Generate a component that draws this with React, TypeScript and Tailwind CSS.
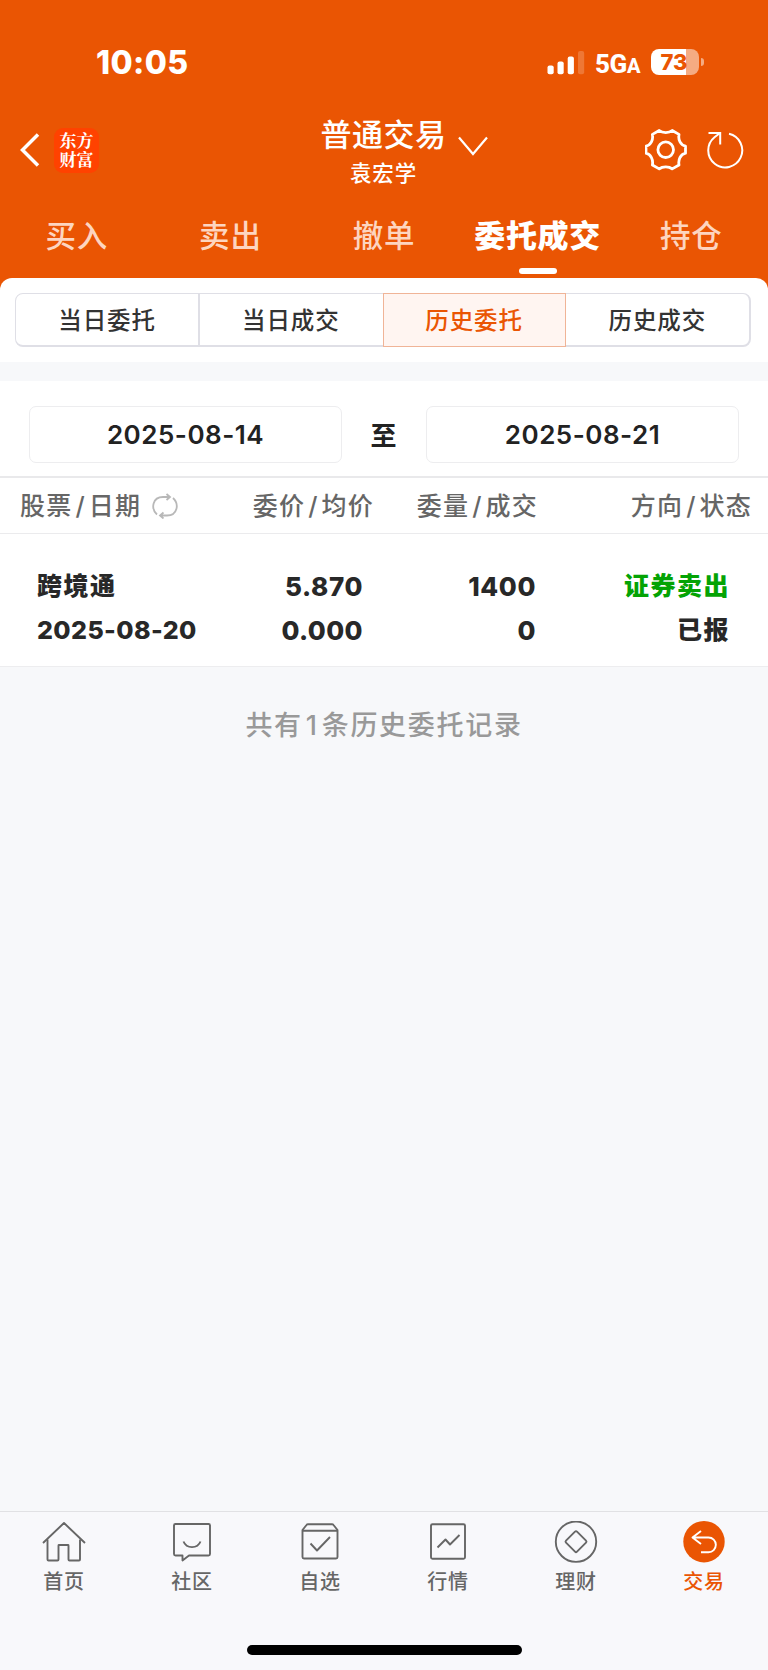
import type { ReactNode } from "react";

const topTabs = ["买入", "卖出", "撤单", "委托成交", "持仓"];
const segments = ["当日委托", "当日成交", "历史委托", "历史成交"];

const icons: Record<string, ReactNode> = {
  home: (
    <>
      <path d="M1 22L22 2L43 22" />
      <path d="M5.500 18.500V38.500Q5.500 39.500 6.500 39.500H15.500Q16.500 39.500 16.500 38.500V24.500Q16.500 24 17 24H26Q26.500 24 26.500 24.500V38.500Q26.500 39.500 27.500 39.500H37Q38 39.500 38 38.500V18.500" />
    </>
  ),
  community: (
    <>
      <path d="M6 3H38.500Q40 3 40 4.500V33Q40 34.500 38.500 34.500H19L12.500 39.500V34.500H5.500Q4 34.500 4 33V4.500Q4 3 5.500 3Z" />
      <path d="M13.500 20.500C16.500 28 27.500 28 30.500 20.500" />
    </>
  ),
  watchlist: (
    <>
      <path d="M4.500 9L8.500 4Q9 3.300 10 3.300H34Q35 3.300 35.500 4L39.500 9V36Q39.500 37.500 38 37.500H6Q4.500 37.500 4.500 36Z" />
      <path d="M4.500 9.700H39.500M12.500 22.500L19 29.500L32 16" />
    </>
  ),
  market: (
    <>
      <rect x="5" y="3.300" width="34" height="34.400" rx="1.500" />
      <path d="M11.500 26.500L19.500 18.500L24 23.500L33.500 14" />
    </>
  ),
  wealth: (
    <>
      <circle cx="22" cy="20.700" r="20.200" />
      <path d="M21 10.700Q22 9.700 23 10.700L32 19.700Q33 20.700 32 21.700L23 30.700Q22 31.700 21 30.700L12 21.700Q11 20.700 12 19.700Z" />
    </>
  ),
  trade: (
    <>
      <circle cx="22" cy="20.700" r="20.700" fill="#ea5503" stroke="none" />
      <path d="M19 10L10.500 16.500L19 23M10.500 16.500H26.500A7.300 7.300 0 0 1 26.500 31.200H19" stroke="#fff" />
    </>
  ),
};

const bottomTabs = [
  { icon: "home", label: "首页" },
  { icon: "community", label: "社区" },
  { icon: "watchlist", label: "自选" },
  { icon: "market", label: "行情" },
  { icon: "wealth", label: "理财" },
  { icon: "trade", label: "交易", active: true },
];

function StatusBar() {
  return (
    <div className="flex h-[100px] items-start justify-between pl-[96px] pr-[64px] pt-[47px] text-white">
      <span className="text-[32px] font-extrabold leading-8 tracking-[0.400px]">10:05</span>
      <div className="flex h-8 items-center">
        <svg className="h-6 w-[38px]" viewBox="0 0 38 24" fill="currentColor">
          <rect x="0.500" y="14.500" width="6.200" height="8.800" rx="2" />
          <rect x="10.500" y="10.500" width="6.200" height="12.800" rx="2" />
          <rect x="20.700" y="5.500" width="6.200" height="17.800" rx="2" />
          <rect x="31" y="0" width="6.200" height="23.300" rx="2" opacity="0.2" />
        </svg>
        <span className="ml-[10px] mt-[2px] flex w-[46px] items-baseline whitespace-nowrap font-['Roboto'] text-[26px] font-extrabold leading-none tracking-[-0.400px]">
          5G<span className="text-[20px]">A</span>
        </span>
        <div className="ml-[10px] -mt-[2px] flex h-[26px] w-12 items-center justify-center rounded-[8px] bg-[linear-gradient(90deg,#fff_73%,#f5ab82_73%)] pr-[2px] text-[22px] font-extrabold leading-none text-[#ea5503]">
          73
        </div>
        <div className="-mt-[2px] ml-[2px] h-2 w-[3px] rounded-r-full bg-[#f5ab82]" />
      </div>
    </div>
  );
}

function NavBar() {
  return (
    <div className="grid h-[100px] grid-cols-3 text-white">
      <div className="flex h-[100px] items-center pl-5">
        <svg className="h-[34px] w-5" viewBox="0 0 20 34" fill="none" stroke="currentColor" strokeWidth="3.500">
          <path d="M18 1.500L2.500 17L18 32.500" />
        </svg>
        <div className="ml-[14px] flex h-[45px] w-[45px] flex-col items-center justify-center whitespace-pre rounded-[9px] bg-[#ff4200] pb-[3px] text-center font-['Noto_Serif_CJK_SC','Noto_Sans_CJK_SC',serif] text-[17px] font-bold leading-[19px]">
          {"东方\n财富"}
        </div>
      </div>
      <div className="relative flex flex-col items-center pt-[18px]">
        <span className="-ml-px text-[31px] font-medium leading-[34px] tracking-[0.500px]">普通交易</span>
        <span className="-ml-px mt-[9px] text-[21.500px] font-medium leading-6 tracking-[0.800px]">袁宏学</span>
        <svg className="absolute left-[202px] top-[36px] h-5 w-[30px]" viewBox="0 0 30 20" fill="none" stroke="currentColor" strokeWidth="2.200">
          <path d="M1 1.500L15 18L29 1.500" />
        </svg>
      </div>
      <div className="flex h-[100px] items-center justify-end gap-[19px] pr-[24px]">
        <svg className="h-[42px] w-[42px]" viewBox="0 0 42 42" fill="none" stroke="currentColor" strokeWidth="2.800" strokeLinejoin="round">
          <circle cx="20.700" cy="20.700" r="7.800" />
          <path d="M14.200 1.500C17.500 4.300 24 4.300 27.200 1.500L34 5.400C33 11 35.500 16 40.500 17.200V24.200C35.500 25.500 33 30.500 34 36L27.200 39.900C24 37.100 17.500 37.100 14.200 39.900L7.400 36C8.400 30.500 6 25.500 1 24.200V17.200C6 16 8.400 11 7.400 5.400Z" />
        </svg>
        <svg className="h-[38px] w-[38px]" viewBox="0 0 38 38" fill="none" stroke="currentColor" strokeWidth="2">
          <path d="M23 2.800A17 17 0 1 1 8.500 6.200L14 2" />
          <path d="M2.500 2H14.200V13.500" />
        </svg>
      </div>
    </div>
  );
}

function TopTabs() {
  return (
    <div className="grid h-[78px] grid-cols-5">
      {topTabs.map((tab) =>
        tab === "委托成交" ? (
          <div key={tab} className="flex flex-col items-center whitespace-nowrap pt-[19px] text-[31px] font-extrabold leading-[34px] tracking-[0.700px] text-white">
            {tab}
            <div className="mt-[15px] h-[6px] w-[38px] rounded-full bg-white" />
          </div>
        ) : (
          <div key={tab} className="pt-[19px] text-center text-[30.500px] font-medium leading-[34px] tracking-[0.800px] text-[#fdd5c0]">
            {tab}
          </div>
        )
      )}
    </div>
  );
}

function Segments() {
  return (
    <div className="h-[84px] rounded-t-[12px] bg-white px-[15px] pt-[15px]">
      <div className="grid h-[54px] w-[736px] grid-cols-4 rounded-[8px] border border-r-2 border-b-2 border-[#dfdfe6] text-[23.500px] font-medium tracking-[0.900px] text-[#333]">
        {segments.map((label, i) => (
          <div
            key={label}
            className={
              i === 2
                ? "-mt-px -mb-[2px] flex items-center justify-center border border-[#f0b497] bg-[#fff5f1] pt-[2px] text-[#ea5503]"
                : i === 0
                  ? "-mr-px flex items-center justify-center border-r-2 border-[#dfdfe6] pt-[2px]"
                  : "flex items-center justify-center pt-[2px]"
            }
          >
            {label}
          </div>
        ))}
      </div>
    </div>
  );
}

function DateRange() {
  return (
    <div className="flex h-[97px] items-start border-b-2 border-[#e9e9eb] bg-white px-[29px] pt-[25px] text-[26px] font-semibold text-[#222]">
      <div className="flex h-[57px] w-[313px] items-center justify-center rounded-[7px] border border-[#ededef] tracking-[0.500px]">
        2025-08-14
      </div>
      <div className="flex h-[57px] flex-1 items-center justify-center pr-px pt-px">至</div>
      <div className="flex h-[57px] w-[313px] items-center justify-center rounded-[7px] border border-[#ededef] tracking-[0.500px]">
        2025-08-21
      </div>
    </div>
  );
}

function Orders() {
  return (
    <>
      <div className="grid h-[56px] grid-cols-[210px_164px_164px_214px] items-center border-b border-[#ebebed] bg-white pt-[2px] text-[25px] font-medium tracking-[1.200px] text-[#666]">
        <div className="flex items-center pl-[20px]">
          股票<span className="mx-[3px]">/</span>日期
          <svg className="-mt-px ml-[11px] h-[26px] w-[26px] shrink-0" viewBox="0 0 26 26" fill="none" stroke="#b8b8b8" strokeWidth="1.800">
            <path d="M5 21.500C-1.500 15.500 0.500 4 11 4H18M14.500 1L18 4L14.500 7" />
            <path d="M21 5C27.500 11 25.500 22.500 15 22.500H8M11.500 19.500L8 22.500L11.500 25.500" />
          </svg>
        </div>
        <div className="text-right">委价<span className="mx-[3px]">/</span>均价</div>
        <div className="text-right">委量<span className="mx-[3px]">/</span>成交</div>
        <div className="text-right">方向<span className="mx-[3px]">/</span>状态</div>
      </div>
      <div className="grid h-[133px] grid-cols-[200px_163px_173px_194px] content-start border-b border-[#ededef] bg-white pt-[31px] text-[26px] font-extrabold leading-[43.500px] text-[#282828]">
        <div className="pl-[37px] text-[25px] tracking-[1.500px]">跨境通</div>
        <div className="text-right tracking-[0.600px]">5.870</div>
        <div className="text-right tracking-[0.600px]">1400</div>
        <div className="text-right text-[25px] tracking-[1.500px] text-[#04a304]">证券卖出</div>
        <div className="whitespace-nowrap pl-[37px] text-[25px] tracking-[0.400px]">2025-08-20</div>
        <div className="text-right tracking-[0.400px]">0.000</div>
        <div className="text-right tracking-[0.400px]">0</div>
        <div className="text-right text-[25px] tracking-[1.500px]">已报</div>
      </div>
    </>
  );
}

function BottomNav() {
  return (
    <nav className="flex h-[159px] flex-col items-center border-t border-[#e1e1e4] bg-[#f8f8fb]">
      <div className="grid h-[133px] w-full grid-cols-6">
        {bottomTabs.map((tab) => (
          <div
            key={tab.label}
            className={
              tab.active
                ? "flex flex-col items-center pt-[9px] text-[#ea5503]"
                : "flex flex-col items-center pt-[9px] text-[#666]"
            }
          >
            <svg className="h-11 w-11" viewBox="0 0 44 44" fill="none" stroke="currentColor" strokeWidth="1.900" strokeLinejoin="round">
              {icons[tab.icon]}
            </svg>
            <span className="mt-[5px] text-[20px] font-medium leading-6 tracking-[0.800px]">{tab.label}</span>
          </div>
        ))}
      </div>
      <div className="h-[10px] w-[275px] rounded-full bg-black" />
    </nav>
  );
}

export default function App() {
  return (
    <div className="flex h-[1670px] w-[768px] flex-col bg-[#f7f8fa] font-['Inter','Noto_Sans_CJK_SC',sans-serif]">
      <header className="h-[290px] bg-[#ea5503]">
        <StatusBar />
        <NavBar />
        <TopTabs />
      </header>
      <main className="-mt-3 flex-1">
        <Segments />
        <div className="h-[19px]" />
        <DateRange />
        <Orders />
        <p className="mt-[39px] text-center text-[27px] font-medium leading-10 tracking-[1.700px] text-[#999]">
          共有<span className="mx-[3px]">1</span>条历史委托记录
        </p>
      </main>
      <BottomNav />
    </div>
  );
}
